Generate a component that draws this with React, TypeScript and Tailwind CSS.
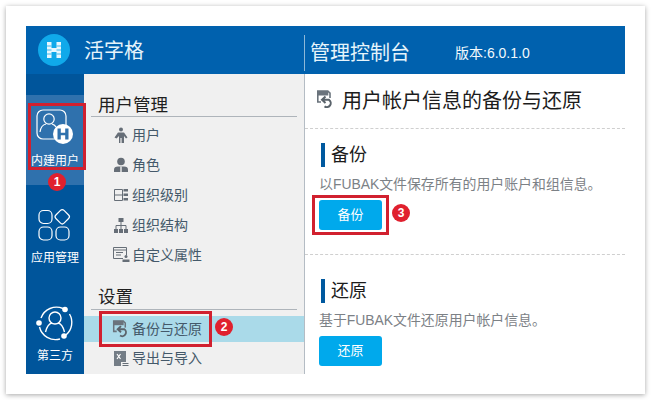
import type { ReactNode } from "react";

const font = "font-['Liberation_Sans','Noto_Sans_CJK_SC',sans-serif]";

function Badge(props: { n: number; className: string }) {
  return (
    <div className={`absolute flex h-[18px] w-[18px] items-center justify-center rounded-full bg-[#e0202e] text-[12px] font-bold leading-none text-white ${props.className}`}>
      {props.n}
    </div>
  );
}

function Svg(props: { size: number; children: ReactNode }) {
  return (
    <svg width={props.size} height={props.size} viewBox={`0 0 ${props.size} ${props.size}`} className="shrink-0">
      {props.children}
    </svg>
  );
}

const c = "#666e77";

function BackupIcon(props: { size: number; bg: string }) {
  return (
    <svg width={props.size} height={props.size} viewBox="0 0 19 19" className="shrink-0">
      <path d="M1.800 1h10l2.200 2.200V12H1.800z" fill="none" stroke="#6a737c" strokeWidth="1.600" />
      <path d="M1.800 1h10.500v4.500H1.800z" fill="#6a737c" />
      <path d="M5 8h14v11H5z" fill={props.bg} />
      <path d="M9.500 6.500 6 9.800l3.500 3.200M6.800 9.800h6.200a3.900 3.900 0 1 1-4.500 6.600" fill="none" stroke="#5a636b" strokeWidth="2" />
    </svg>
  );
}

const icons: Record<string, ReactNode> = {
  user: (
    <Svg size={16}>
      <circle cx="8" cy="2.500" r="2" fill={c} />
      <path d="M5 5.500h6l3.500 5-1.500 1-2-2.500V16H8.600v-5H7.400v5H6V9L3.500 11.500 1.500 10.500z" fill={c} />
    </Svg>
  ),
  role: (
    <Svg size={16}>
      <circle cx="8" cy="4.500" r="3.800" fill={c} />
      <path d="M1 15v-2.500Q1 9.500 5 9.500h6q4 0 4 3V15z" fill={c} />
      <path d="M7.300 9.500h1.400v5.500H7.300z" fill="#f0f0f0" />
    </Svg>
  ),
  level: (
    <Svg size={16}>
      <path d="M1.500 2.500h8v11h-8zM1.500 8h8" fill="none" stroke={c} strokeWidth="1" />
      <path d="M10.500 2h4.500v2.500h-4.500zM10.500 6.500h4.500v2.500h-4.500zM10.500 11h4.500v2.500h-4.500z" fill={c} />
    </Svg>
  ),
  org: (
    <Svg size={16}>
      <path d="M5.500 1h5v4h-5zM1 12h4v4H1zM6 12h4v4H6zM11 12h4v4h-4z" fill={c} />
      <path d="M8 5v7M3 12V8.500h10V12" fill="none" stroke={c} strokeWidth="1" />
    </Svg>
  ),
  attr: (
    <Svg size={18}>
      <path d="M1.500 1.500h13v11h-13zM1.500 4h13M4 6.500h7M4 9h5" fill="none" stroke={c} strokeWidth="1" />
      <path d="M11 9.500h6v6h-6z" fill="#f0f0f0" />
      <circle cx="14" cy="10.500" r="1.500" fill={c} />
      <path d="M10.500 16v-2.500h7V16z" fill={c} />
    </Svg>
  ),
  backup: <BackupIcon size={18} bg="#aadae9" />,
  export: (
    <Svg size={17}>
      <path d="M2 1h12v11H9v4H2z" fill="#747d86" />
      <path d="M5 4l3.500 5M8.500 4 5 9" stroke="#fff" strokeWidth="1.200" />
      <path d="M10.500 13.500h6M10.500 15.500h6" stroke={c} strokeWidth="1" />
    </Svg>
  ),
};

function MenuItem(props: { icon: string; label: string; active?: boolean; h?: string }) {
  return (
    <div className={`flex items-center gap-[3px] pl-[28px] ${props.h ?? "h-[30px]"} ${props.active ? "bg-[#aadae9]" : ""}`}>
      <div className="flex w-[17px] justify-center">{icons[props.icon]}</div>
      <span className="text-[14px] leading-none text-[#44596a]">{props.label}</span>
    </div>
  );
}

function NavItem(props: { icon: ReactNode; label: string; active?: boolean; h: string }) {
  return (
    <div className={`flex flex-col items-center ${props.h} ${props.active ? "bg-[#2f71ad]" : ""}`}>
      {props.icon}
      <span className="text-[12px] leading-none text-white">{props.label}</span>
    </div>
  );
}

function Section(props: { title: string; text: string; button: string }) {
  return (
    <div className="pl-[16px]">
      <div className="flex items-center gap-[6px]">
        <div className="h-[24px] w-[4px] bg-[#00599f]" />
        <span className="text-[18px] leading-none text-[#1c1c1c]">{props.title}</span>
      </div>
      <div className="-ml-[2px] mt-[8px] text-[13.900px] leading-[18px] text-[#7c8186]">{props.text}</div>
      <div className="-ml-[2px] mt-[7px] flex h-[30px] w-[63px] items-center justify-center rounded-[3px] bg-[#00a9ec] text-[13px] text-white">
        {props.button}
      </div>
    </div>
  );
}

export default function App() {
  return (
    <div className={`h-[400px] w-[651px] overflow-hidden bg-white p-[6px] ${font}`}>
      <div className="h-[388px] w-[639px] bg-white p-[20px] shadow-[0_1px_5px_rgba(0,0,0,0.35)]">
        <div className="relative flex h-[348px] w-[599px] flex-col overflow-hidden">
          <div className="flex h-[48px] shrink-0 items-center bg-[#0061ae] text-white">
            <div className="ml-[12px] flex h-[32px] w-[32px] items-center justify-center rounded-full bg-[#10a9ea]">
              <svg width="18" height="18" viewBox="0 0 18 18">
                <path d="M2 1h4.500v16H2zM11.500 1H16v16h-4.500zM6.500 7h5v4h-5z" fill="#e8f7fe" />
                <path d="M2 5h4.500M2 9h4.500M2 13h4.500M11.500 5H16M11.500 9H16M11.500 13H16" stroke="#10a9ea" strokeWidth="0.800" />
              </svg>
            </div>
            <div className="ml-[14px] w-[220px] pt-[2px] text-[20px] leading-none text-[#e6f4fb]">活字格</div>
            <div className="mt-[6px] flex h-[36px] items-center border-l border-[#8db8d8] pl-[5px]">
              <span className="text-[20px] leading-none text-[#e6f4fb]">管理控制台</span>
              <span className="ml-[45px] text-[14px] leading-none text-[#f2f9fd]">版本:6.0.1.0</span>
            </div>
          </div>

          <div className="flex min-h-0 flex-1">
            <div className="w-[58px] shrink-0 bg-[#00559b] pt-[21px]">
              <NavItem
                active
                h="h-[90px] pt-[14px]"
                label="内建用户"
                icon={
                  <svg width="38" height="38" viewBox="0 0 38 38" className="mb-[8px]">
                    <rect x="1" y="1" width="29" height="29" rx="6" fill="none" stroke="#fff" strokeWidth="1.200" />
                    <circle cx="13" cy="10" r="5.200" fill="none" stroke="#fff" strokeWidth="1.200" />
                    <path d="M4 23q1-7 6-8M16 15q3 1 4 3" fill="none" stroke="#fff" strokeWidth="1.200" />
                    <circle cx="27" cy="25" r="10" fill="#fff" />
                    <path d="M21.500 19.500h3.300v11h-3.300zM29.200 19.500h3.300v11h-3.300zM24.800 23.800h4.400v2.400h-4.400z" fill="#2f71ad" />
                  </svg>
                }
              />
              <NavItem
                h="h-[101px] pt-[23px]"
                label="应用管理"
                icon={
                  <svg width="34" height="34" viewBox="0 0 34 34" className="mb-[10px]">
                    <g fill="none" stroke="#fff" strokeWidth="1.200">
                      <rect x="1" y="2.500" width="13" height="13" rx="4.500" />
                      <rect x="1" y="19" width="13" height="13" rx="4.500" />
                      <rect x="18" y="19" width="13" height="13" rx="4.500" />
                      <rect x="18.500" y="3" width="11.500" height="11.500" rx="2.500" transform="rotate(45 24.250 8.750)" />
                    </g>
                  </svg>
                }
              />
              <NavItem
                h="h-[78px] pt-[18px]"
                label="第三方"
                icon={
                  <svg width="38" height="38" viewBox="0 0 38 38" className="mb-[8px]">
                    <g fill="none" stroke="#fff" strokeWidth="1.400">
                      <path d="M5 14A16.500 16.500 0 0 1 27 4.500M33.500 10A16.500 16.500 0 0 1 30 31M24 35A16.500 16.500 0 0 1 3.500 23" />
                      <circle cx="19" cy="14" r="6" />
                      <path d="M9.500 28q2-8 6.500-9M28.500 28q-2-8-6.500-9" />
                    </g>
                    <circle cx="29" cy="5.500" r="2.800" fill="#fff" />
                    <circle cx="3" cy="19" r="2.800" fill="#fff" />
                    <circle cx="28" cy="32" r="2.800" fill="#fff" />
                  </svg>
                }
              />
            </div>

            <div className="w-[221px] shrink-0 border-r border-[#b4bcc4] bg-[#f0f0f0]">
              <div className="mx-[7px] mt-[20px] h-[23px] border-b border-[#aeb4ba] pl-[7px] text-[17.500px] leading-[22px] text-[#1f1f1f]">用户管理</div>
              <div className="pt-[3px]">
                <MenuItem icon="user" label="用户" />
                <MenuItem icon="role" label="角色" />
                <MenuItem icon="level" label="组织级别" />
                <MenuItem icon="org" label="组织结构" />
                <MenuItem icon="attr" label="自定义属性" />
              </div>
              <div className="mx-[7px] mt-[14px] h-[26px] border-b border-[#aeb4ba] pl-[7px] text-[17.500px] leading-[27px] text-[#1f1f1f]">设置</div>
              <div className="pt-[6px]">
                <MenuItem icon="backup" label="备份与还原" active h="h-[26px]" />
                <MenuItem icon="export" label="导出与导入" h="h-[32px]" />
              </div>
            </div>

            <div className="min-w-0 flex-1 bg-white">
              <div className="flex h-[55px] items-center gap-[7px] border-b border-dashed border-[#cfcfcf] pl-[11px]">
                <div className="mb-[3px]">
                  <BackupIcon size={19} bg="#ffffff" />
                </div>
                <span className="text-[20px] leading-none text-[#1c1c1c]">用户帐户信息的备份与还原</span>
              </div>
              <div className="h-[126px] border-b border-dashed border-[#cfcfcf] pt-[14px]">
                <Section title="备份" text="以FUBAK文件保存所有的用户账户和组信息。" button="备份" />
              </div>
              <div className="pt-[24px]">
                <Section title="还原" text="基于FUBAK文件还原用户帐户信息。" button="还原" />
              </div>
            </div>
          </div>

          <div className="absolute left-[2px] top-[77px] h-[67px] w-[58px] border-[3px] border-[#d1202f]" />
          <Badge n={1} className="left-[22px] top-[147px]" />
          <div className="absolute left-[73px] top-[285px] h-[36px] w-[113px] border-[3px] border-[#d1202f]" />
          <Badge n={2} className="left-[189px] top-[292px]" />
          <div className="absolute left-[286px] top-[169px] h-[40px] w-[77px] border-[3px] border-[#d1202f]" />
          <Badge n={3} className="left-[366px] top-[178px]" />
        </div>
      </div>
    </div>
  );
}
